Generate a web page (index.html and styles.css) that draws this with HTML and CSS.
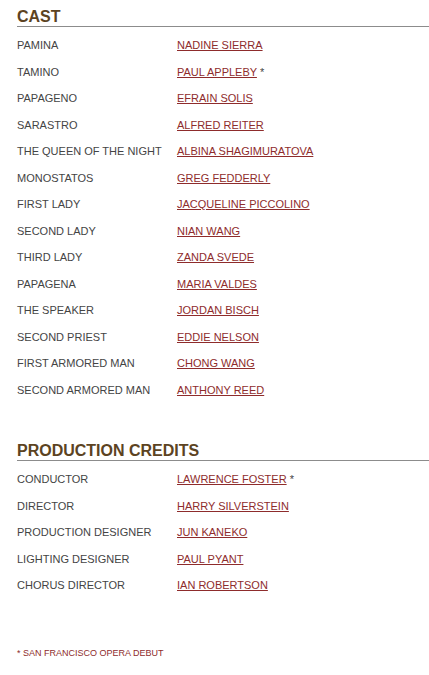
FILE: index.html
```html
<!DOCTYPE html>
<html>
<head>
<meta charset="utf-8">
<link rel="stylesheet" href="styles.css">
</head>
<body>
<section class="section">
  <h2 class="heading">CAST</h2>
  <div class="rows">
    <div class="row"><span class="role">PAMINA</span><span class="name"><a href="#">NADINE SIERRA</a></span></div>
    <div class="row"><span class="role">TAMINO</span><span class="name"><a href="#">PAUL APPLEBY</a> *</span></div>
    <div class="row"><span class="role">PAPAGENO</span><span class="name"><a href="#">EFRAIN SOLIS</a></span></div>
    <div class="row"><span class="role">SARASTRO</span><span class="name"><a href="#">ALFRED REITER</a></span></div>
    <div class="row"><span class="role">THE QUEEN OF THE NIGHT</span><span class="name"><a href="#">ALBINA SHAGIMURATOVA</a></span></div>
    <div class="row"><span class="role">MONOSTATOS</span><span class="name"><a href="#">GREG FEDDERLY</a></span></div>
    <div class="row"><span class="role">FIRST LADY</span><span class="name"><a href="#">JACQUELINE PICCOLINO</a></span></div>
    <div class="row"><span class="role">SECOND LADY</span><span class="name"><a href="#">NIAN WANG</a></span></div>
    <div class="row"><span class="role">THIRD LADY</span><span class="name"><a href="#">ZANDA SVEDE</a></span></div>
    <div class="row"><span class="role">PAPAGENA</span><span class="name"><a href="#">MARIA VALDES</a></span></div>
    <div class="row"><span class="role">THE SPEAKER</span><span class="name"><a href="#">JORDAN BISCH</a></span></div>
    <div class="row"><span class="role">SECOND PRIEST</span><span class="name"><a href="#">EDDIE NELSON</a></span></div>
    <div class="row"><span class="role">FIRST ARMORED MAN</span><span class="name"><a href="#">CHONG WANG</a></span></div>
    <div class="row"><span class="role">SECOND ARMORED MAN</span><span class="name"><a href="#">ANTHONY REED</a></span></div>
  </div>
</section>
<section class="section section-credits">
  <h2 class="heading">PRODUCTION CREDITS</h2>
  <div class="rows">
    <div class="row"><span class="role">CONDUCTOR</span><span class="name"><a href="#">LAWRENCE FOSTER</a> *</span></div>
    <div class="row"><span class="role">DIRECTOR</span><span class="name"><a href="#">HARRY SILVERSTEIN</a></span></div>
    <div class="row"><span class="role">PRODUCTION DESIGNER</span><span class="name"><a href="#">JUN KANEKO</a></span></div>
    <div class="row"><span class="role">LIGHTING DESIGNER</span><span class="name"><a href="#">PAUL PYANT</a></span></div>
    <div class="row"><span class="role">CHORUS DIRECTOR</span><span class="name"><a href="#">IAN ROBERTSON</a></span></div>
  </div>
</section>
<p class="footnote">* SAN FRANCISCO OPERA DEBUT</p>
</body>
</html>
```
FILE: styles.css
```css
html, body {
  margin: 0;
  padding: 0;
  background: #ffffff;
}
body {
  font-family: "Liberation Sans", Arial, sans-serif;
  padding: 8px 0 0 17px;
}
.heading {
  margin: 0;
  font-size: 16px;
  line-height: 18px;
  font-weight: bold;
  color: #5c4322;
  border-bottom: 1px solid #8c8c8c;
  padding-bottom: 0;
}
.rows {
  padding-top: 5px;
}
.row {
  display: grid;
  grid-template-columns: 160px 1fr;
  font-size: 11px;
  line-height: 26.5px;
  color: #444444;
}
.name a {
  color: #8e2c2c;
  text-decoration: underline;
}
.section-credits {
  margin-top: 39px;
}
.footnote {
  margin: 49px 0 0 0;
  font-size: 9px;
  color: #8e2c2c;
}
```
